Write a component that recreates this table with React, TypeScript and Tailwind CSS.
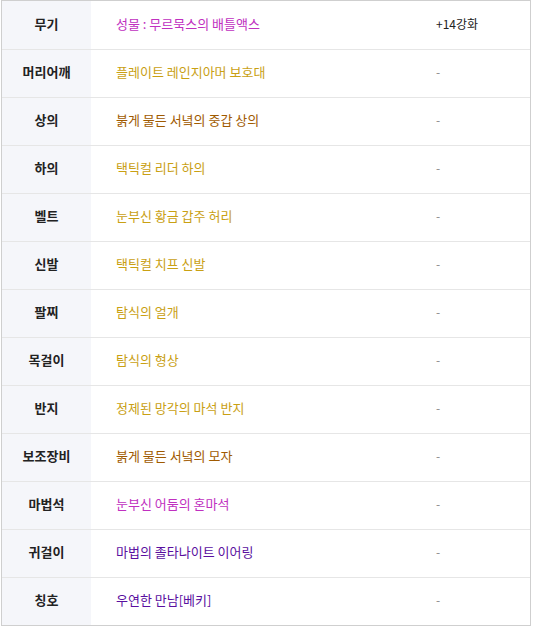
import React from 'react';

type Row = { slot: string; name: string; color: string; extra: string };

const rows: Row[] = [
  { slot: '무기', name: '성물 : 무르묵스의 배틀액스', color: 'text-[#c030c0]', extra: '+14강화' },
  { slot: '머리어깨', name: '플레이트 레인지아머 보호대', color: 'text-[#c9a013]', extra: '-' },
  { slot: '상의', name: '붉게 물든 서녘의 중갑 상의', color: 'text-[#a05a00]', extra: '-' },
  { slot: '하의', name: '택틱컬 리더 하의', color: 'text-[#c9a013]', extra: '-' },
  { slot: '벨트', name: '눈부신 황금 갑주 허리', color: 'text-[#c9a013]', extra: '-' },
  { slot: '신발', name: '택틱컬 치프 신발', color: 'text-[#c9a013]', extra: '-' },
  { slot: '팔찌', name: '탐식의 얼개', color: 'text-[#c9a013]', extra: '-' },
  { slot: '목걸이', name: '탐식의 형상', color: 'text-[#c9a013]', extra: '-' },
  { slot: '반지', name: '정제된 망각의 마석 반지', color: 'text-[#c9a013]', extra: '-' },
  { slot: '보조장비', name: '붉게 물든 서녘의 모자', color: 'text-[#a05a00]', extra: '-' },
  { slot: '마법석', name: '눈부신 어둠의 혼마석', color: 'text-[#c030c0]', extra: '-' },
  { slot: '귀걸이', name: '마법의 졸타나이트 이어링', color: 'text-[#5a0fa0]', extra: '-' },
  { slot: '칭호', name: '우연한 만남[베키]', color: 'text-[#5a0fa0]', extra: '-' },
];

export default function App() {
  return (
    <div className="pl-[1px] bg-white min-h-screen font-['Noto_Sans_CJK_KR',sans-serif] text-[12px]">
      <div className="w-[530px] border border-[#cfcfcf]">
        {rows.map((r, i) => (
          <div
            key={r.slot}
            className={`flex h-[48px] ${i > 0 ? 'border-t border-[#e6e6e6]' : ''}`}
          >
            <div className="w-[89px] shrink-0 bg-[#f5f6fa] flex items-center justify-center font-bold text-[#222] text-[13px] pb-[3px]">
              {r.slot}
            </div>
            <div className={`w-[320px] pl-[25px] flex items-center text-[13px] pb-[3px] ${r.color}`}>{r.name}</div>
            <div
              className={`flex-1 pl-[25px] flex items-center pb-[3px] ${r.extra === '-' ? 'text-[#888]' : 'text-[#222]'}`}
            >
              {r.extra}
            </div>
          </div>
        ))}
      </div>
    </div>
  );
}
